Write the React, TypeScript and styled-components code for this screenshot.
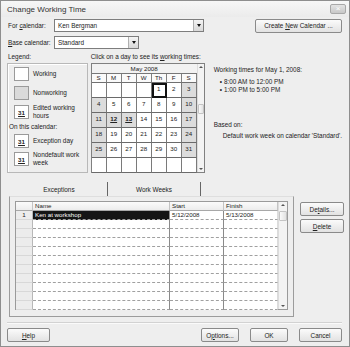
import styled, { createGlobalStyle } from "styled-components";

const GlobalStyle = createGlobalStyle`
  html, body { margin: 0; padding: 0; background: #ffffff; }
  body {
    font-family: "Liberation Sans", Arial, sans-serif;
    font-size: 6.4px;
    color: #222;
  }
  * { box-sizing: border-box; }
`;

const Window = styled.div`
  width: 350px;
  height: 347px;
  border: 1px solid #8e8e8e;
  background: #eeeeee;
  display: flex;
  flex-direction: column;
`;

const TitleBar = styled.div`
  height: 16px;
  display: flex;
  align-items: center;
  justify-content: space-between;
  padding: 0 3px 0 6px;
  background: linear-gradient(#f7f7f7, #ebebeb);
  font-size: 8px;
  color: #333;
`;

const CloseBtn = styled.div`
  width: 16px;
  height: 10px;
  border: 1px solid #a8a8a8;
  border-radius: 2px;
  background: linear-gradient(#e4e4e4, #c8c8c8);
  color: #fff;
  font-size: 8px;
  line-height: 8px;
  text-align: center;
`;

const Content = styled.div`
  flex: 1;
  display: flex;
  flex-direction: column;
  padding: 0 7px 0 6px;
`;

const FieldRow = styled.div<{ $top: number }>`
  display: flex;
  align-items: center;
  height: 13px;
  margin-top: ${(p) => p.$top}px;
`;

const Label = styled.span`
  width: 47px;
  padding-left: 1px;
  white-space: nowrap;
`;

const Combo = styled.div<{ $w: number }>`
  width: ${(p) => p.$w}px;
  height: 13px;
  border: 1px solid #7d7d7d;
  background: #fff;
  display: flex;
  align-items: center;
  justify-content: space-between;
  padding-left: 3px;
`;

const ComboArrow = styled.div`
  width: 10px;
  height: 11px;
  background: linear-gradient(#f4f4f4, #d8d8d8);
  border-left: 1px solid #b0b0b0;
  display: flex;
  align-items: center;
  justify-content: center;
  &::after {
    content: "";
    border-left: 2.5px solid transparent;
    border-right: 2.5px solid transparent;
    border-top: 3px solid #111;
  }
`;

const Button = styled.div<{ $w: number }>`
  width: ${(p) => p.$w}px;
  height: 14px;
  border: 1px solid #8a8a8a;
  border-radius: 2px;
  background: linear-gradient(#fbfbfb, #e2e2e2);
  display: flex;
  align-items: center;
  justify-content: center;
  color: #222;
  white-space: pre;
`;

const Middle = styled.div`
  display: flex;
  margin-top: 3px;
`;

const Column = styled.div<{ $w?: number; $gap?: number }>`
  width: ${(p) => (p.$w ? `${p.$w}px` : "auto")};
  margin-left: ${(p) => p.$gap ?? 0}px;
  display: flex;
  flex-direction: column;
`;

const ColLabel = styled.div<{ $indent?: number }>`
  height: 11px;
  padding-left: ${(p) => p.$indent ?? 1}px;
  line-height: 9px;
  white-space: nowrap;
`;

const LegendBox = styled.div`
  height: 110px;
  border: 1px solid #b8b8b8;
  box-shadow: inset 1px 1px 0 #fff;
  padding: 3px 0 0 6px;
  display: flex;
  flex-direction: column;
`;

const LegendItem = styled.div<{ $mb: number }>`
  display: flex;
  align-items: center;
  height: 14px;
  margin-bottom: ${(p) => p.$mb}px;
`;

const Swatch = styled.div<{ $gray?: boolean }>`
  width: 15px;
  height: 14px;
  border: 1px solid #9a9a9a;
  background: ${(p) => (p.$gray ? "#dadada" : "#fff")};
  margin-right: 4px;
  display: flex;
  align-items: center;
  justify-content: center;
  font-weight: bold;
  font-size: 6.2px;
  text-decoration: underline;
  flex-shrink: 0;
`;

const LegendText = styled.span`
  line-height: 8px;
  white-space: nowrap;
`;

const SubHead = styled.div`
  height: 10px;
  margin: 1px 0 1px -5px;
  line-height: 8px;
`;

const CalBox = styled.div`
  height: 110px;
  border: 1px solid #808080;
  background: #fff;
  display: flex;
`;

const CalMain = styled.div`
  width: 105px;
  display: flex;
  flex-direction: column;
`;

const MonthHeader = styled.div`
  height: 9px;
  line-height: 9px;
  text-align: center;
  background: #f2f2f2;
  font-size: 6.2px;
`;

const CalGrid = styled.div`
  display: grid;
  grid-template-columns: repeat(7, 15px);
  grid-template-rows: 9px repeat(6, 15px);
  border-top: 1px solid #777;
`;

const DayName = styled.div`
  border-right: 1px solid #808080;
  border-bottom: 1px solid #707070;
  text-align: center;
  font-size: 6.2px;
  line-height: 8px;
  background: #fafafa;
`;

const DayCell = styled.div<{ $gray: boolean; $exc?: boolean; $sel?: boolean }>`
  border-right: 1px solid #7a7a7a;
  border-bottom: 1px solid #6a6a6a;
  background: ${(p) => (p.$gray ? "#dcdcdc" : "#fff")};
  text-align: center;
  font-size: 6.2px;
  padding-top: 2px;
  font-weight: ${(p) => (p.$exc ? "bold" : "normal")};
  text-decoration: ${(p) => (p.$exc ? "underline" : "none")};
  outline: ${(p) => (p.$sel ? "2px solid #111" : "none")};
  outline-offset: -2px;
`;

const VScroll = styled.div<{ $w: number }>`
  width: ${(p) => p.$w}px;
  background: #f3f3f3;
  border-left: 1px solid #dcdcdc;
  display: flex;
  flex-direction: column;
  align-items: center;
  justify-content: space-between;
  padding: 2px 0;
`;

const Arrow = styled.div<{ $up?: boolean }>`
  width: 0;
  height: 0;
  border-left: 2px solid transparent;
  border-right: 2px solid transparent;
  ${(p) => (p.$up ? "border-bottom: 2px solid #555;" : "border-top: 2px solid #555;")}
`;

const Thumb = styled.div<{ $top: number; $h: number }>`
  width: 100%;
  height: ${(p) => p.$h}px;
  margin-top: ${(p) => p.$top}px;
  background: linear-gradient(90deg, #fafafa, #e2e2e2);
  border: 1px solid #c4c4c4;
  border-radius: 1px;
`;

const ScrollTrack = styled.div`
  flex: 1;
  width: 100%;
`;

const Info = styled.div`
  padding-top: 3px;
  line-height: 8px;
  white-space: nowrap;
`;

const InfoList = styled.ul`
  margin: 4px 0 0;
  padding: 0 0 0 6px;
  list-style: none;
  li::before {
    content: "•";
    margin-right: 2px;
  }
`;

const BasedOn = styled.div`
  margin-top: 27px;
`;

const BasedText = styled.div`
  margin-top: 3px;
  padding-left: 9px;
`;

const Lower = styled.div`
  display: flex;
  margin-top: 9px;
`;

const TabArea = styled.div`
  margin-left: 2px;
  width: 285px;
  display: flex;
  flex-direction: column;
`;

const TabStrip = styled.div`
  display: flex;
  height: 14px;
  padding-left: 2px;
`;

const Tab = styled.div<{ $w: number }>`
  width: ${(p) => p.$w}px;
  border-right: 1px solid #666;
  display: flex;
  align-items: center;
  justify-content: center;
  font-size: 6.4px;
`;

const Pane = styled.div`
  height: 121px;
  border: 1px solid #9c9c9c;
  border-top-color: #dedede;
  padding: 4px 5px 0 5px;
`;

const Table = styled.div`
  height: 109px;
  border: 1px solid #9a9a9a;
  background: #fff;
  display: flex;
`;

const TableBody = styled.div`
  flex: 1;
  display: grid;
  grid-template-columns: 17px 137px 54px 54px;
  grid-auto-rows: 9px;
  align-content: start;
`;

const HeadCell = styled.div`
  background: linear-gradient(#fbfbfb, #ececec);
  border-right: 1px solid #c4c4c4;
  border-bottom: 1px solid #a8a8a8;
  padding-left: 2px;
  line-height: 8px;
  font-size: 6.2px;
`;

const RowHead = styled.div`
  background: #ececec;
  border-right: 1px solid #b8b8b8;
  border-bottom: 1px solid #d8d8d8;
  text-align: center;
  line-height: 8px;
  font-size: 6.2px;
`;

const Cell = styled.div<{ $sel?: boolean; $last?: boolean }>`
  border-right: 1px solid ${(p) => (p.$last ? "#dcdcdc" : "#8a8a8a")};
  border-bottom: 1px dashed #a0a0a0;
  background: ${(p) => (p.$sel ? "#151515" : "#fff")};
  color: ${(p) => (p.$sel ? "#fff" : "#222")};
  padding-left: 2px;
  line-height: 8px;
  font-size: 6.2px;
  white-space: nowrap;
`;

const SideButtons = styled.div`
  margin-left: 6px;
  padding-top: 20px;
  display: flex;
  flex-direction: column;
  gap: 3px;
`;

const Separator = styled.div`
  margin-top: 5px;
  border-top: 1px solid #d2d2d2;
  border-bottom: 1px solid #fafafa;
`;

const Footer = styled.div`
  display: flex;
  align-items: center;
  margin-top: 4px;
`;

const Spacer = styled.div`
  flex: 1;
`;

const Gap = styled.div<{ $w: number }>`
  width: ${(p) => p.$w}px;
`;

const days: (number | null)[] = [
  null, null, null, null, 1, 2, 3,
  4, 5, 6, 7, 8, 9, 10,
  11, 12, 13, 14, 15, 16, 17,
  18, 19, 20, 21, 22, 23, 24,
  25, 26, 27, 28, 29, 30, 31,
  null, null, null, null, null, null, null,
];

const dayNames = ["S", "M", "T", "W", "Th", "F", "S"];

const exceptions = [
  { name: "Ken at workshop", start: "5/12/2008", finish: "5/13/2008" },
];

function Calendar() {
  return (
    <CalBox>
      <CalMain>
        <MonthHeader>May 2008</MonthHeader>
        <CalGrid>
          {dayNames.map((d, i) => (
            <DayName key={"n" + i}>{d}</DayName>
          ))}
          {days.map((d, i) => {
            const col = i % 7;
            const exc = d === 12 || d === 13;
            const gray = d !== null && (col === 0 || col === 6 || exc);
            return (
              <DayCell key={i} $gray={gray} $exc={exc} $sel={d === 1}>
                {d ?? ""}
              </DayCell>
            );
          })}
        </CalGrid>
      </CalMain>
      <VScroll $w={8}>
        <Arrow $up />
        <ScrollTrack>
          <Thumb $top={36} $h={10} />
        </ScrollTrack>
        <Arrow />
      </VScroll>
    </CalBox>
  );
}

function ExceptionTable() {
  const rows = 11;
  return (
    <Table>
      <TableBody>
        <HeadCell />
        <HeadCell>Name</HeadCell>
        <HeadCell>Start</HeadCell>
        <HeadCell>Finish</HeadCell>
        {Array.from({ length: rows }).map((_, i) => {
          const ex = exceptions[i];
          return [
            <RowHead key={"h" + i}>{ex ? i + 1 : ""}</RowHead>,
            <Cell key={"a" + i} $sel={!!ex}>{ex?.name}</Cell>,
            <Cell key={"b" + i}>{ex?.start}</Cell>,
            <Cell key={"c" + i} $last>{ex?.finish}</Cell>,
          ];
        })}
      </TableBody>
      <VScroll $w={11}>
        <Arrow $up />
        <ScrollTrack>
          <Thumb $top={5} $h={10} />
        </ScrollTrack>
        <Arrow />
      </VScroll>
    </Table>
  );
}

export default function App() {
  return (
    <>
      <GlobalStyle />
      <Window>
        <TitleBar>
          <span>Change Working Time</span>
          <CloseBtn>×</CloseBtn>
        </TitleBar>
        <Content>
          <FieldRow $top={2}>
            <Label>
              For <u>c</u>alendar:
            </Label>
            <Combo $w={150}>
              Ken Bergman
              <ComboArrow />
            </Combo>
            <Spacer />
            <Button $w={87}>
              {"Create "}
              <u>N</u>
              {"ew Calendar ..."}
            </Button>
          </FieldRow>
          <FieldRow $top={4}>
            <Label>
              <u>B</u>ase calendar:
            </Label>
            <Combo $w={85}>
              Standard
              <ComboArrow />
            </Combo>
          </FieldRow>
          <Middle>
            <Column $w={82}>
              <ColLabel>Legend:</ColLabel>
              <LegendBox>
                <LegendItem $mb={5}>
                  <Swatch />
                  <LegendText>Working</LegendText>
                </LegendItem>
                <LegendItem $mb={5}>
                  <Swatch $gray />
                  <LegendText>Nonworking</LegendText>
                </LegendItem>
                <LegendItem $mb={3}>
                  <Swatch>31</Swatch>
                  <LegendText>
                    Edited working
                    <br />
                    hours
                  </LegendText>
                </LegendItem>
                <SubHead>On this calendar:</SubHead>
                <LegendItem $mb={4}>
                  <Swatch>31</Swatch>
                  <LegendText>Exception day</LegendText>
                </LegendItem>
                <LegendItem $mb={0}>
                  <Swatch>31</Swatch>
                  <LegendText>
                    Nondefault work
                    <br />
                    week
                  </LegendText>
                </LegendItem>
              </LegendBox>
            </Column>
            <Column $w={114} $gap={3}>
              <ColLabel $indent={0}>
                Click on a day to see its <u>w</u>orking times:
              </ColLabel>
              <Calendar />
            </Column>
            <Column $gap={9}>
              <ColLabel />
              <Info>
                Working times for May 1, 2008:
                <InfoList>
                  <li>8:00 AM to 12:00 PM</li>
                  <li>1:00 PM to 5:00 PM</li>
                </InfoList>
                <BasedOn>Based on:</BasedOn>
                <BasedText>Default work week on calendar 'Standard'.</BasedText>
              </Info>
            </Column>
          </Middle>
          <Lower>
            <TabArea>
              <TabStrip>
                <Tab $w={97}>Exceptions</Tab>
                <Tab $w={93}>Work Weeks</Tab>
              </TabStrip>
              <Pane>
                <ExceptionTable />
              </Pane>
            </TabArea>
            <SideButtons>
              <Button $w={44}>
                De<u>t</u>ails...
              </Button>
              <Button $w={44}>
                <u>D</u>elete
              </Button>
            </SideButtons>
          </Lower>
          <Separator />
          <Footer>
            <Button $w={43}>
              <u>H</u>elp
            </Button>
            <Spacer />
            <Button $w={38}>
              O<u>p</u>tions...
            </Button>
            <Gap $w={11} />
            <Button $w={38}>OK</Button>
            <Gap $w={11} />
            <Button $w={43}>Cancel</Button>
          </Footer>
        </Content>
      </Window>
    </>
  );
}
